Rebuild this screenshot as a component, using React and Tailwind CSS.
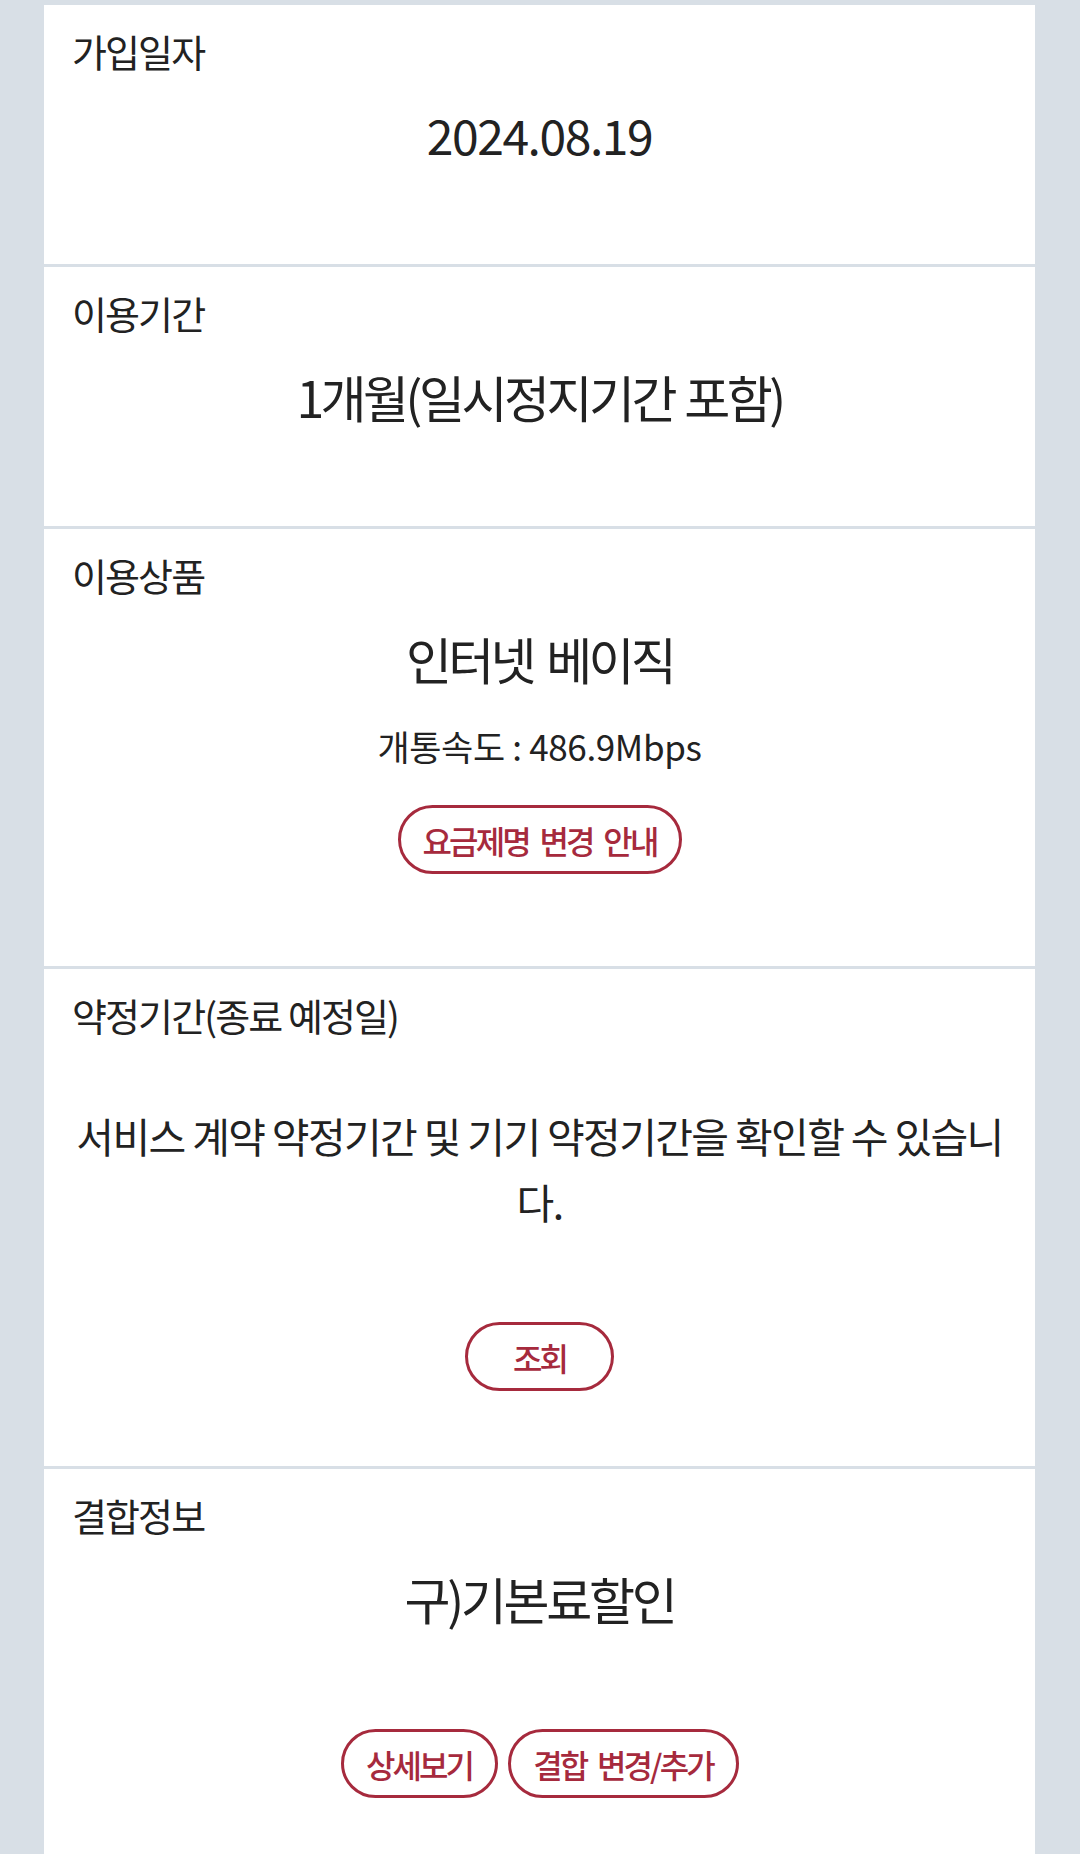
import React from "react";

const FONT = { fontFamily: '"Noto Sans CJK KR", "Noto Sans", sans-serif' };

function Pill({ children, className = "" }) {
  return (
    <button
      type="button"
      className={
        "flex h-[69px] items-center justify-center rounded-full border-[3px] border-[#a62a3d] bg-white text-[32px] font-medium leading-none tracking-[-0.09em] text-[#a62a3d] [word-spacing:0.2em] " +
        className
      }
    >
      {children}
    </button>
  );
}

function Card({ label, children, className = "" }) {
  return (
    <section className={"bg-white px-[28px] pt-[20px] " + className}>
      <h3 className="text-[38px] font-normal leading-[52px] tracking-[-0.05em] text-[#222]">
        {label}
      </h3>
      {children}
    </section>
  );
}

export default function App() {
  return (
    <div
      style={FONT}
      className="min-h-[1854px] bg-[#d8dfe6] px-[44px] pt-[5px] text-[#222]"
    >
      <div className="flex w-[991px] flex-col gap-[3px]">
        <Card label="가입일자" className="pb-[94px]">
          <p className="mt-[21px] text-center text-[48px] leading-[72px] tracking-[-0.03em]">
            2024.08.19
          </p>
        </Card>

        <Card label="이용기간" className="pb-[94px]">
          <p className="mt-[21px] text-center text-[50px] leading-[72px] tracking-[-0.07em] [word-spacing:0.05em]">
            1개월(일시정지기간 포함)
          </p>
        </Card>

        <Card label="이용상품" className="pb-[92px]">
          <p className="mt-[21px] text-center text-[50px] leading-[72px] tracking-[-0.075em] [word-spacing:0.12em]">
            인터넷 베이직
          </p>
          <p className="mt-[29px] text-center text-[35px] leading-[46px] tracking-[-0.01em]">
            개통속도 : 486.9Mbps
          </p>
          <div className="mt-[36px] flex justify-center">
            <Pill className="w-[284px]">요금제명 변경 안내</Pill>
          </div>
        </Card>

        <Card label="약정기간(종료 예정일)" className="pb-[75px]">
          <p className="-mx-[8px] mt-[61px] text-center text-[41px] leading-[66px] tracking-[-0.04em]">
            서비스 계약 약정기간 및 기기 약정기간을 확인할 수 있습니
            <br />
            다.
          </p>
          <div className="mt-[88px] flex justify-center">
            <Pill className="w-[149px]">조회</Pill>
          </div>
        </Card>

        <Card label="결합정보" className="pb-[90px]">
          <p className="mt-[21px] text-center text-[50px] leading-[72px] tracking-[-0.065em]">
            구)기본료할인
          </p>
          <div className="mt-[95px] flex justify-center gap-[10px]">
            <Pill className="w-[157px]">상세보기</Pill>
            <Pill className="w-[231px]">결합 변경/추가</Pill>
          </div>
        </Card>
      </div>
    </div>
  );
}
